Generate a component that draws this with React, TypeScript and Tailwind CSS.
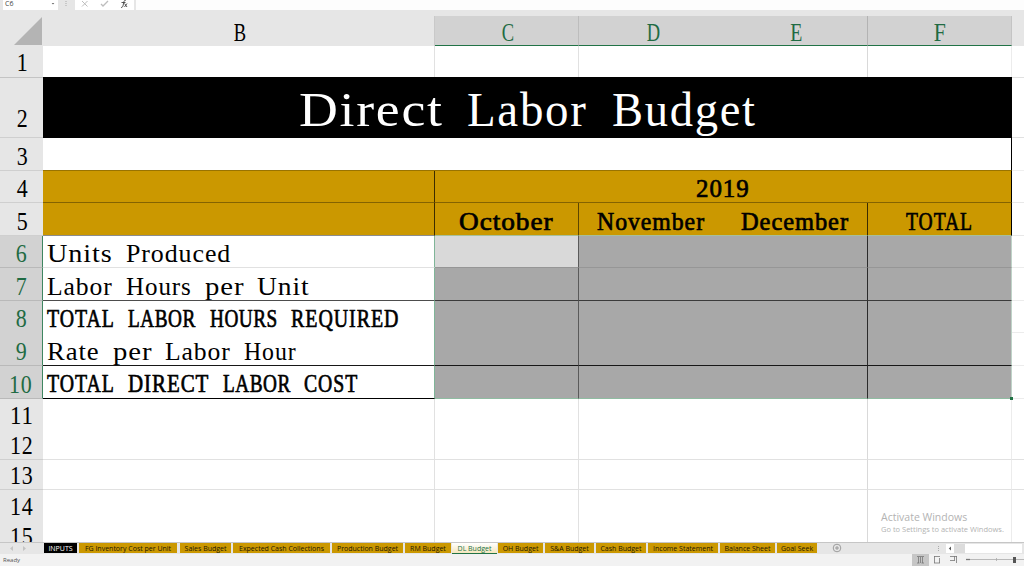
import React from "react";
import clsx from "clsx";

const SERIF = '"Liberation Serif"';
const ctx = document.createElement("canvas").getContext("2d")!;

type MonoProps = {
    text: string;
    size?: number;
    pitch?: number;
    bold?: boolean;
    className?: string;
};

// Sets serif text on a fixed pitch, word by word, condensing or widening each word to fill its cells
const Mono = ({ text, size = 26, pitch = 13.15, bold, className }: MonoProps) => {
    ctx.font = `${size}px ${SERIF}`;
    const words = text.split(" ");
    return (
        <span
            className={clsx("inline-flex whitespace-pre leading-none", bold && "[-webkit-text-stroke:0.7px_black]", className)}
            style={{ fontSize: size }}
        >
            {words.map((word, i) => {
                const natural = ctx.measureText(word).width;
                const cells = word.length * pitch;
                const scale = Math.min(1.12, Math.max(0.74, (cells * 0.93) / natural));
                // a single glyph is centred in its cell instead of tracked
                const spacing = word.length === 1 ? 0 : (cells / scale - natural) / word.length;
                return (
                    <span
                        key={i}
                        className={clsx("inline-block", word.length === 1 ? "flex origin-center justify-center" : "origin-left")}
                        style={{
                            width: (word.length + (i < words.length - 1 ? 1 : 0)) * pitch,
                            letterSpacing: spacing,
                            transform: `scaleX(${scale})`,
                        }}
                    >
                        {word + (i < words.length - 1 ? " " : "")}
                    </span>
                );
            })}
        </span>
    );
};

const rowGrid = "grid grid-cols-[43px_392px_144px_289px_144px_12px] shrink-0";

type RowProps = {
    n: number;
    height: string;
    selected?: boolean;
    numClass?: string;
    children?: React.ReactNode;
};

const Row = ({ n, height, selected, numClass = "border-b pb-px", children }: RowProps) => (
    <div className={clsx(rowGrid, height)}>
        <div
            className={clsx(
                "flex items-end justify-center overflow-hidden",
                selected
                    ? "bg-[#d2d2d2] text-[#1f6b43] border-b-[#b9b9b9] border-r border-r-[#3f8661]"
                    : "bg-[#e6e6e6] text-black border-b-[#cfcfcf]",
                numClass
            )}
        >
            <Mono text={String(n)} size={25} pitch={11.8} />
        </div>
        {children}
    </div>
);

const EmptyCells = ({ line }: { line?: boolean }) => {
    const bottom = line && "border-b border-b-[#e1e1e1]";
    return (
        <>
            <div className={clsx("border-r border-r-[#e1e1e1]", bottom)} />
            <div className={clsx("border-r border-r-[#e1e1e1]", bottom)} />
            <div className={clsx("border-r border-r-[#d9d9d9]", bottom)} />
            <div className={clsx("border-r border-r-[#ececec]", bottom)} />
            <div className={clsx(bottom)} />
        </>
    );
};

const selectedRows = [
    { n: 6, label: "Units Produced", height: "h-8", line: "border-b border-b-[#e1e1e1]", cell: "border-b border-b-[#969696]" },
    { n: 7, label: "Labor Hours per Unit", height: "h-[33px]", line: "border-b border-b-[#4d4d4d]", cell: "border-b border-b-[#3b3b3b]" },
    { n: 8, label: "TOTAL LABOR HOURS REQUIRED", height: "h-8", bold: true, line: "pb-px", cell: "" },
    { n: 9, label: "Rate per Labor Hour", height: "h-[33px]", line: "border-b border-b-[#171717]", cell: "border-b border-b-[#171717]" },
    { n: 10, label: "TOTAL DIRECT LABOR COST", height: "h-[33px]", bold: true, line: "border-b border-b-black pb-px", cell: "border-b border-b-[#8fbca1]" },
];

const tabs = [
    { name: "INPUTS", cls: "w-[33px] bg-black text-white mr-[2px]" },
    { name: "FG Inventory Cost per Unit", cls: "w-[98px] mr-[3px]" },
    { name: "Sales Budget", cls: "w-[51px] mr-[2px]" },
    { name: "Expected Cash Collections", cls: "w-[97px] mr-[2px]" },
    { name: "Production Budget", cls: "w-[71px] mr-[2px]" },
    { name: "RM Budget", cls: "w-[46px] mr-px" },
    { name: "DL Budget", cls: "w-[45px] mr-px", active: true },
    { name: "OH Budget", cls: "w-[45px] mr-[2px]" },
    { name: "S&A Budget", cls: "w-[49px] mr-[2px]" },
    { name: "Cash Budget", cls: "w-[50px] mr-[2px]" },
    { name: "Income Statement", cls: "w-[70px] mr-[2px]" },
    { name: "Balance Sheet", cls: "w-[55px] mr-[2px]" },
    { name: "Goal Seek", cls: "w-[40px]" },
];

const FormulaBar = () => (
    <div className="flex h-[10px] shrink-0 bg-[#e6e6e6] pl-[3px] font-['Open_Sans',sans-serif] text-[7px] leading-[8px] text-[#444]">
        <div className="flex w-[55px] justify-between bg-white pl-[2px] pr-[3px]">
            <span>C6</span>
            <svg width="4" height="8" viewBox="0 0 4 8"><path d="M.7 3h2.6L2 4.5z" fill="#666" /></svg>
        </div>
        <svg width="17" height="10" viewBox="0 0 17 10" fill="#aaa">
            <path d="M7.5 1h1v1h-1zM7.5 3h1v1h-1zM7.5 5h1v1h-1z" />
        </svg>
        <svg className="bg-white" width="59" height="10" viewBox="0 0 59 10" fill="none">
            <path d="M7 1l5.500 5.500M12.500 1L7 6.500" stroke="#bdbdbd" />
            <path d="M26 4l2 2 5-5" stroke="#bdbdbd" strokeWidth="1.300" />
            <path d="M46 7.500c1.500 0 2-1 2.200-2.500L49 1.500C49.200.5 50 0 51 .3M46.500 2.500h4M49.500 3.500l2.500 3.500M52 3.500l-2.500 3.500" stroke="#444" strokeWidth=".9" />
        </svg>
        <div className="ml-[2px] flex-1 bg-[#fdfdfd]" />
    </div>
);

const ColumnHeaders = () => (
    <div className={clsx(rowGrid, "h-9 bg-[#e6e6e6] pt-[6px]")}>
        <svg width="43" height="30" viewBox="0 0 43 30"><path d="M14 29L42 1v28z" fill="#b4b4b4" /></svg>
        <div className="flex items-end justify-center border-r border-[#c9c9c9] pb-px">
            <Mono text="B" size={25} pitch={13} />
        </div>
        <div className="flex items-end justify-center border-b border-r border-b-[#217346] border-r-[#bdbdbd] bg-[#d2d2d2] text-[#1f6b43]">
            <Mono text="C" size={25} pitch={13} />
        </div>
        <div className="grid grid-cols-2 border-b border-r border-b-[#217346] border-r-[#b3b3b3] bg-[#d2d2d2] text-[#1f6b43]">
            <div className="flex items-end justify-center"><Mono text="D" size={25} pitch={13} /></div>
            <div className="flex items-end justify-center"><Mono text="E" size={25} pitch={13} /></div>
        </div>
        <div className="flex items-end justify-center border-b border-r border-b-[#217346] border-r-[#c4c4c4] bg-[#d2d2d2] text-[#1f6b43]">
            <Mono text="F" size={25} pitch={13} />
        </div>
        <div />
    </div>
);

const SheetTabs = () => (
    <div className="flex h-3 shrink-0 items-start border-t border-[#c6c6c6] bg-[#e6e6e6] font-['Open_Sans',sans-serif] text-[7px]">
        <svg className="shrink-0" width="44" height="11" viewBox="0 0 44 11" fill="#c4c4c4">
            <path d="M13 3v5l-3-2.500zM23 3v5l3-2.500z" />
        </svg>
        {tabs.map((tab) => (
            <div
                key={tab.name}
                className={clsx(
                    "flex shrink-0 items-center justify-center whitespace-nowrap leading-[9px]",
                    tab.active
                        ? "h-[11px] border-b border-[#217346] bg-linear-to-b from-white to-[#f6e7bd] text-[#217346]"
                        : "h-[10px]",
                    !tab.active && tab.name !== "INPUTS" && "bg-[#cb9800] text-[#1c1500]",
                    tab.cls
                )}
            >
                {tab.name}
            </div>
        ))}
        <svg className="ml-[15px]" width="10" height="10" viewBox="0 0 10 10" fill="none" stroke="#8a8a8a" strokeWidth=".8">
            <circle cx="5" cy="5" r="3.800" />
            <path d="M5 3v4M3 5h4" />
        </svg>
        <div className="ml-auto flex h-full items-center pr-[2px]">
            <svg width="8" height="10" viewBox="0 0 8 10" fill="#aaa">
                <path d="M0 2h1v1H0zM0 4h1v1H0zM0 6h1v1H0z" />
            </svg>
            <svg className="bg-white" width="8" height="9" viewBox="0 0 8 9"><path d="M5 2.500v4l-2.200-2z" fill="#555" /></svg>
            <div className="h-[9px] w-[11px] bg-[#dcdcdc]" />
            <div className="h-[9px] w-[57px] bg-white" />
        </div>
    </div>
);

const StatusBar = () => (
    <div className="flex h-3 shrink-0 bg-[#f2f2f2] pl-[3px] font-['Open_Sans',sans-serif] text-[6px] leading-[12px] text-[#555]">
        <span>Ready</span>
        <svg className="ml-auto" width="112" height="12" viewBox="0 0 112 12" fill="none" stroke="#777" strokeWidth=".8">
            <path d="M0 0h17v12H0z" fill="#c6c6c6" stroke="none" />
            <path d="M5 2.500h7M6.500 3v6M8.500 3v6M10.500 3v6M5 9h2.500M9.500 9H12" />
            <path d="M22 2.500h6M22 9h6M22.500 2v7M27.500 4v5" />
            <path d="M38 2.500h7M38 6.500h5M42.500 2v4.500M44.500 2v7" />
            <path d="M54 5.500h4" strokeWidth="1.300" />
            <path d="M58 5.500h54M84.500 4v3" stroke="#aaa" />
            <path d="M101 3h3v6h-3z" fill="#555" stroke="none" />
        </svg>
    </div>
);

export default function App() {
    return (
        <div className="relative flex h-[566px] w-[1024px] flex-col overflow-hidden bg-white font-['Liberation_Serif',serif] text-black">
            <FormulaBar />
            <ColumnHeaders />

            <div className="flex h-[496px] shrink-0 flex-col overflow-hidden">
                <Row n={1} height="h-[31px]" numClass="pb-[2px]">
                    <EmptyCells />
                </Row>
                <Row n={2} height="h-[61px]" numClass="border-y border-t-[#c4c4c4] pb-[6px]">
                    <div className="col-span-4 flex items-center justify-center bg-black pt-[4px] text-white">
                        <Mono text="Direct Labor Budget" size={48} pitch={24.1} />
                    </div>
                    <div className="border-y border-[#e1e1e1]" />
                </Row>
                <Row n={3} height="h-[33px]">
                    <div className="col-span-4 border-b border-r border-b-[#997300] border-r-black" />
                    <div className="border-b border-[#efefef]" />
                </Row>
                <Row n={4} height="h-8">
                    <div className="border-b border-r border-b-[#846300] border-r-[#3b2c00] bg-[#cb9800]" />
                    <div className="col-span-3 flex items-end justify-center border-b border-r border-b-[#846300] border-r-black bg-[#cb9800]">
                        <Mono text="2019" pitch={13.4} bold />
                    </div>
                    <div className="border-b border-[#e8e8e8]" />
                </Row>
                <Row n={5} height="h-[33px]">
                    <div className="border-b border-r border-b-[#8c8c8c] border-r-[#3b2c00] bg-[#cb9800]" />
                    <div className="flex items-end justify-center border-b border-r border-b-[#a7bf9a] border-r-[#5d4600] bg-[#cb9800]">
                        <Mono text="October" pitch={13.5} bold />
                    </div>
                    <div className="grid grid-cols-2 border-b border-r border-b-[#a7bf9a] border-r-[#3b2c00] bg-[#cb9800]">
                        <div className="flex items-end justify-center"><Mono text="November" pitch={13.5} bold /></div>
                        <div className="flex items-end justify-center"><Mono text="December" pitch={13.5} bold /></div>
                    </div>
                    <div className="flex items-end justify-center border-b border-r border-b-[#a7bf9a] border-r-black bg-[#cb9800]">
                        <Mono text="TOTAL" pitch={13.4} bold />
                    </div>
                    <div className="border-b border-[#e8e8e8]" />
                </Row>

                {selectedRows.map((row) => (
                    <Row key={row.n} n={row.n} height={row.height} selected numClass={row.n === 8 ? "pb-[2px]" : undefined}>
                        <div className={clsx("flex items-end border-r border-r-[#7fb598] pl-1", row.line)}>
                            <Mono text={row.label} bold={row.bold} pitch={row.bold ? 13.55 : 13.15} />
                        </div>
                        <div className={clsx("border-r border-r-[#5a5a5a]", row.n === 6 ? "bg-[#d9d9d9]" : "bg-[#a8a8a8]", row.cell)} />
                        <div className={clsx("border-r border-r-[#2b2b2b] bg-[#a8a8a8]", row.cell)} />
                        <div className={clsx("border-r border-r-[#bfd3c8] bg-[#a8a8a8]", row.cell)} />
                        <div className="border-b border-[#ececec]" />
                    </Row>
                ))}

                <Row n={11} height="h-[31px]" numClass="pb-[2px]"><EmptyCells /></Row>
                <Row n={12} height="h-[30px]"><EmptyCells line /></Row>
                <Row n={13} height="h-[30px]"><EmptyCells line /></Row>
                <Row n={14} height="h-[30px]" numClass="pb-px"><EmptyCells /></Row>
                <Row n={15} height="h-[31px]"><EmptyCells /></Row>
            </div>

            <SheetTabs />
            <StatusBar />

            {/* fill handle */}
            <div className="absolute left-[1010px] top-[397px] size-[3px] bg-[#217346]" />

            <div className="absolute left-[881px] top-[510px] whitespace-nowrap font-['Open_Sans',sans-serif] text-[#b3b3b3]">
                <div className="text-[10.5px] leading-[14px]">Activate Windows</div>
                <div className="text-[7.5px] leading-[11px]">Go to Settings to activate Windows.</div>
            </div>
        </div>
    );
}
